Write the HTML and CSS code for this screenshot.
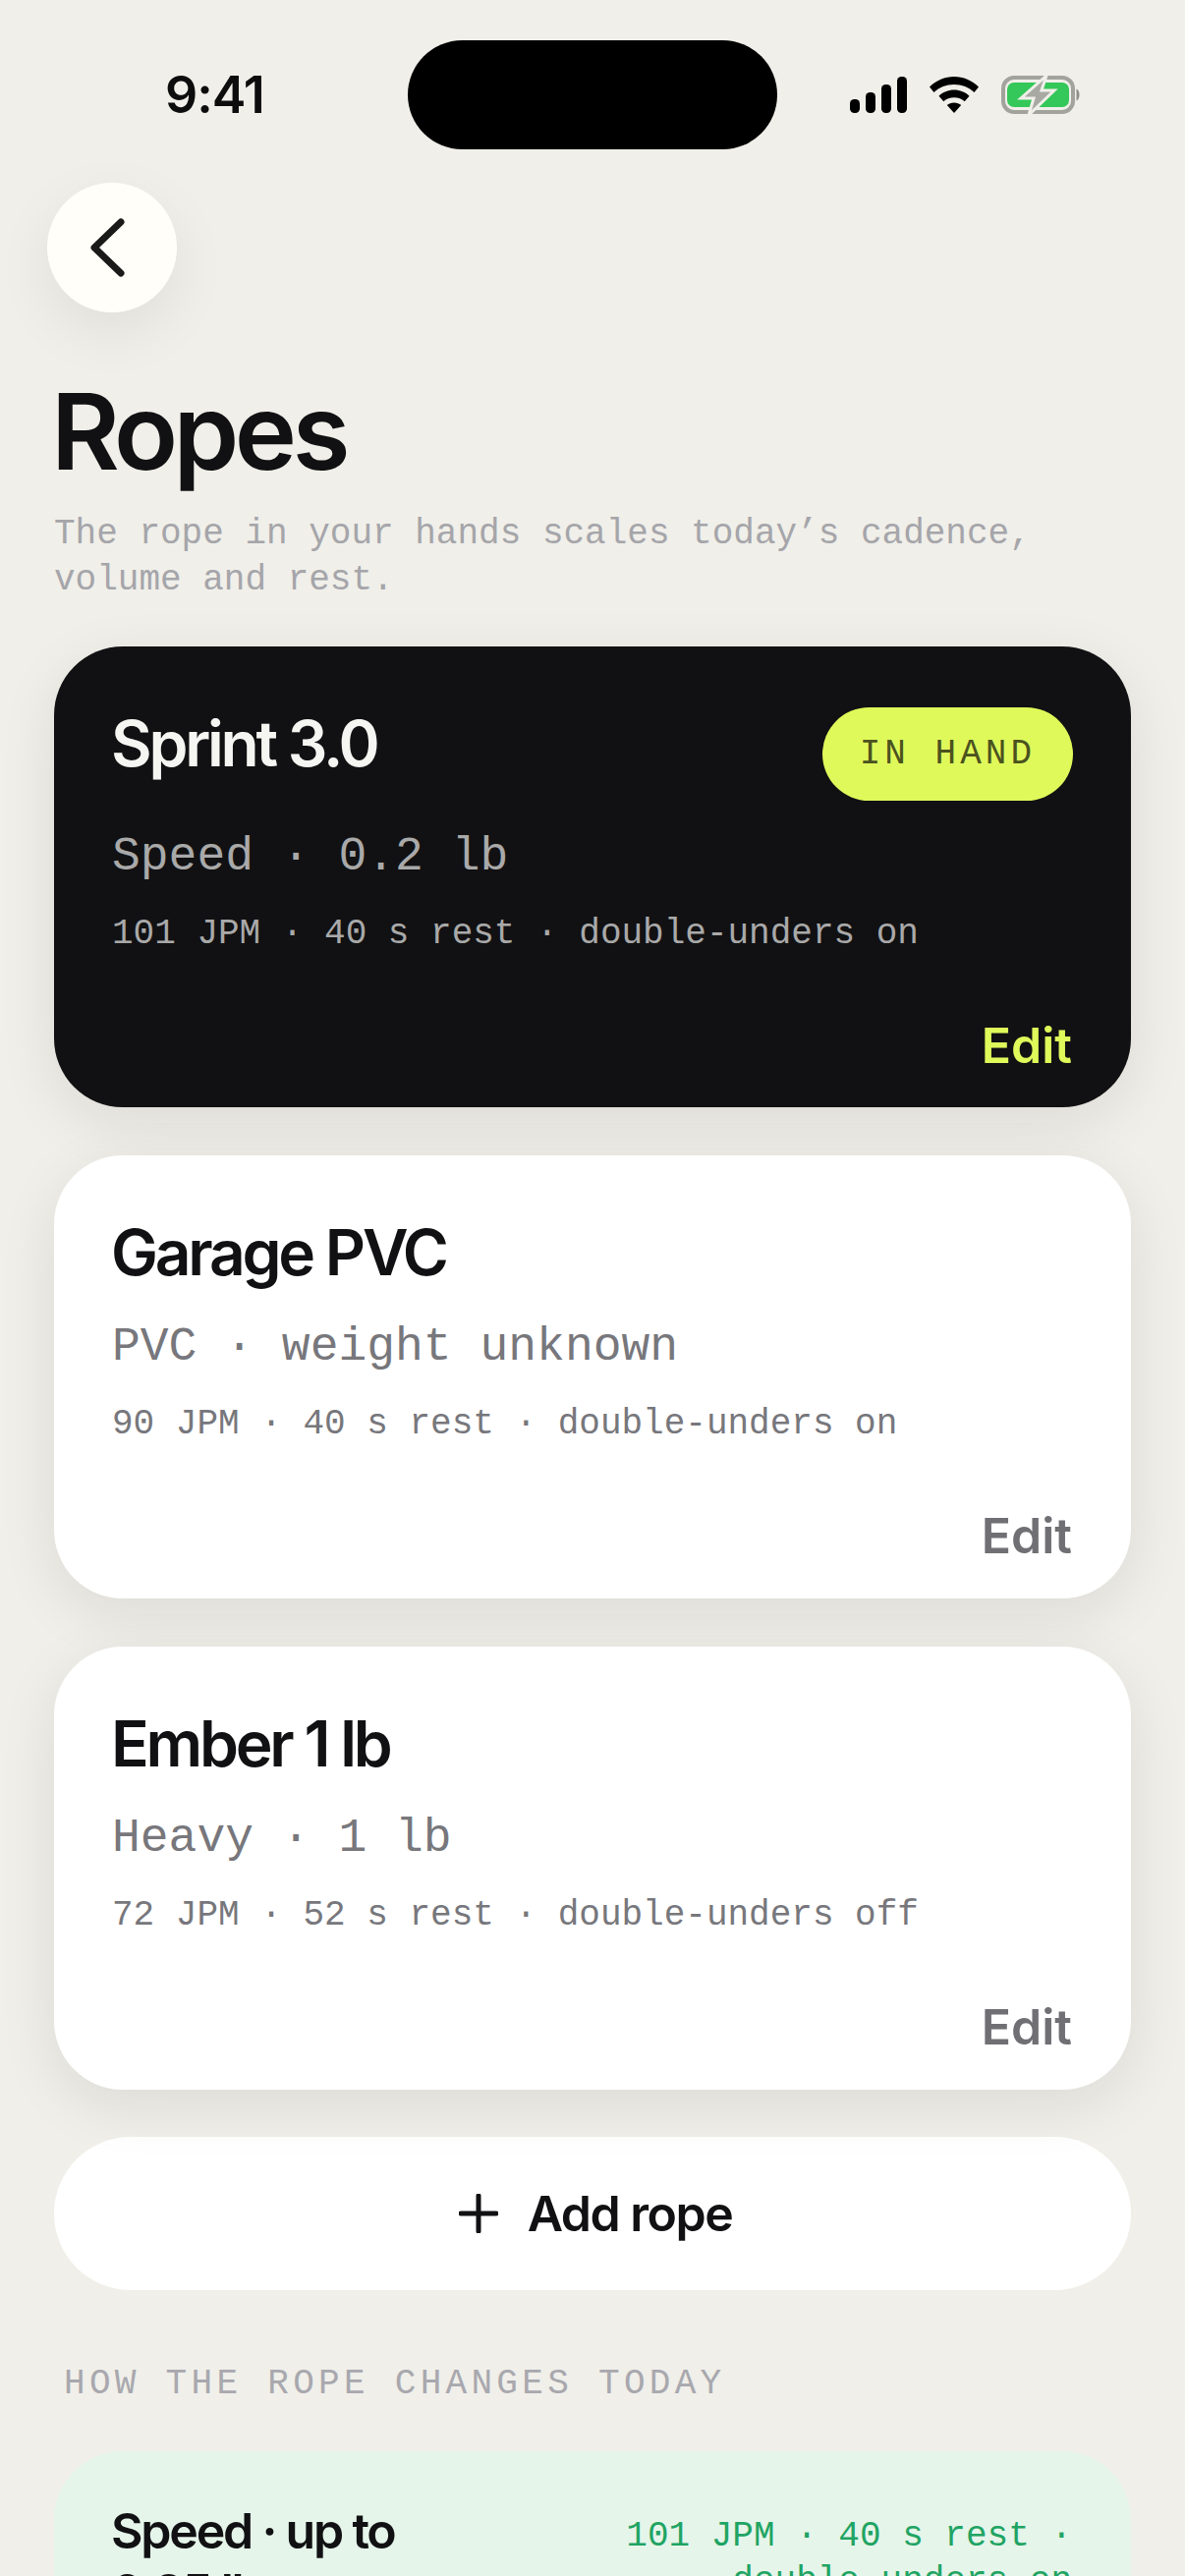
FILE: index.html
```html
<!DOCTYPE html>
<html lang="en">
<head>
<meta charset="utf-8">
<title>Ropes</title>
<link rel="stylesheet" href="styles.css">
</head>
<body>
<div class="phone">
  <header class="status">
    <span class="clock">9:41</span>
    <div class="island"></div>
    <div class="status-icons">
      <svg width="58" height="37" viewBox="0 0 58 37"><rect x="0" y="23" width="10" height="14" rx="4.500"/><rect x="16" y="16" width="10" height="21" rx="4.500"/><rect x="32" y="8" width="10" height="29" rx="4.500"/><rect x="48" y="0" width="10" height="37" rx="4.500"/></svg>
      <svg width="50" height="37" viewBox="0 0 50 37"><path d="M25 0C15.500 0 7 3.800 0 10.500l4.500 5.500C10 10.800 17 8 25 8s15 2.800 20.500 8l4.500-5.500C43 3.800 34.500 0 25 0z"/><path d="M25 13.500c-6 0-11.500 2.300-15.500 6.200l4.800 5.600c2.800-2.600 6.500-4 10.700-4s7.900 1.400 10.700 4l4.800-5.600c-4-3.900-9.500-6.200-15.500-6.200z"/><path d="M25 26.500c-2.900 0-5.300 1-7.200 2.600L25 37l7.200-7.900c-1.900-1.600-4.300-2.600-7.200-2.600z"/></svg>
      <svg width="82" height="41" viewBox="0 0 82 41"><rect x="2" y="3" width="71" height="35" rx="11" fill="none" stroke="#a3a39e" stroke-width="4"/><rect x="6" y="8" width="63" height="25" rx="7" fill="#34c759"/><path d="M76.500 14.500c4 1 4 11 0 12z" fill="#8f8f8a"/><path d="M46 1L20 24h13l-5 17 26-25H41z" fill="#a9a9a4" stroke="#f0efe9" stroke-width="3"/></svg>
    </div>
  </header>

  <button class="back" aria-label="Back">
    <svg width="44" height="60" viewBox="0 0 44 60"><path d="M36 4L9 30l27 26" fill="none" stroke="#1a1a18" stroke-width="7" stroke-linecap="round" stroke-linejoin="round"/></svg>
  </button>

  <h1 class="title">Ropes</h1>
  <p class="lede">The rope in your hands scales today’s cadence, volume and rest.</p>

  <section class="rope-list">
    <article class="rope rope-active">
      <div class="rope-head">
        <h2 class="rope-name">Sprint 3.0</h2>
        <span class="pill">IN HAND</span>
      </div>
      <p class="rope-kind">Speed · 0.2 lb</p>
      <p class="rope-stats">101 JPM · 40 s rest · double-unders on</p>
      <div class="rope-foot"><span class="edit">Edit</span></div>
    </article>
    <article class="rope">
      <div class="rope-head"><h2 class="rope-name">Garage PVC</h2></div>
      <p class="rope-kind">PVC · weight unknown</p>
      <p class="rope-stats">90 JPM · 40 s rest · double-unders on</p>
      <div class="rope-foot"><span class="edit">Edit</span></div>
    </article>
    <article class="rope">
      <div class="rope-head"><h2 class="rope-name">Ember 1 lb</h2></div>
      <p class="rope-kind">Heavy · 1 lb</p>
      <p class="rope-stats">72 JPM · 52 s rest · double-unders off</p>
      <div class="rope-foot"><span class="edit">Edit</span></div>
    </article>
  </section>

  <button class="add">
    <svg width="40" height="40" viewBox="0 0 40 40"><path d="M20 2v36M2 20h36" stroke="#111113" stroke-width="5" stroke-linecap="round"/></svg>
    <span>Add rope</span>
  </button>

  <h3 class="section-label">HOW THE ROPE CHANGES TODAY</h3>

  <article class="change">
    <h4 class="change-name">Speed · up to 0.25 lb</h4>
    <p class="change-stats">101 JPM · 40 s rest · double-unders on</p>
  </article>
</div>
</body>
</html>
```
FILE: styles.css
```css
* { box-sizing: border-box; margin: 0; padding: 0; }
html, body { height: 100%; }
body { background: #f0efe9; overflow: hidden; }

.phone {
  width: 1206px;
  height: 2622px;
  padding: 0 55px;
  overflow: hidden;
  font-family: "Inter", "Liberation Sans", sans-serif;
  color: #111113;
}

/* status bar */
.status {
  display: flex;
  align-items: center;
  height: 111px;
  margin-top: 41px;
}
.clock {
  width: 360px;
  padding-left: 113px;
  font: 600 52px "Inter", sans-serif;
  letter-spacing: -1px;
  color: #0d0d0d;
}
.island { width: 376px; height: 111px; border-radius: 56px; background: #000; }
.status-icons { display: flex; align-items: center; margin-left: 74px; gap: 23px; }
.status-icons svg { display: block; }

.back {
  display: flex;
  align-items: center;
  justify-content: center;
  width: 132px;
  height: 132px;
  margin: 34px 0 0 -7px;
  padding-right: 10px;
  border: 0;
  border-radius: 50%;
  background: #fffef8;
  box-shadow: 0 20px 60px rgba(17, 17, 19, 0.07);
}

.title {
  margin: 66px 0 0 -3px;
  font-size: 107px;
  line-height: 110px;
  font-weight: 600;
  letter-spacing: -4.500px;
  color: #111113;
}

.lede {
  margin-top: 26px;
  width: 1040px;
  font: 400 36px/47px "Liberation Mono", monospace;
  color: #a5a5aa;
}

/* rope cards */
.rope-list { display: flex; flex-direction: column; gap: 49px; margin-top: 44px; }
.rope {
  padding: 62px 60px 36px;
  height: 451px;
  border-radius: 70px;
  background: #fff;
  box-shadow: 0 16px 60px rgba(17, 17, 19, 0.09);
}
.rope-active {
  height: 469px;
  background: #111113;
}
.rope-head { display: flex; justify-content: space-between; align-items: flex-start; height: 73px; }
.rope-active .rope-head { height: 92px; }
.rope-name {
  margin: 4px 0 0 -2px;
  font-size: 64px;
  line-height: 66px;
  font-weight: 600;
  letter-spacing: -3.200px;
  color: #111113;
}
.rope-active .rope-name { color: #f5f5f2; }
.pill {
  flex: none;
  margin: 0 -1px 0 0;
  padding: 0 38px;
  height: 95px;
  border-radius: 48px;
  background: #dff95a;
  color: #4b521e;
  font: 400 36px/95px "Liberation Mono", monospace;
  letter-spacing: 4px;
}
.rope-kind {
  margin: 31px 0 0 -1px;
  font: 400 48px/58px "Liberation Mono", monospace;
  color: #77777c;
}
.rope-stats {
  margin: 27px 0 0 -1px;
  font: 400 36px/46px "Liberation Mono", monospace;
  color: #77777c;
}
.rope-active .rope-kind, .rope-active .rope-stats { color: #a9a9a9; }
.rope-foot { display: flex; justify-content: flex-end; margin-top: 60px; }
.edit { font-size: 50px; line-height: 60px; font-weight: 600; color: #6f6f74; }
.rope-active .edit { color: #dff95a; }

.add {
  display: flex;
  align-items: center;
  justify-content: center;
  gap: 30px;
  width: 100%;
  height: 156px;
  margin-top: 48px;
  padding-left: 6px;
  border: 0;
  border-radius: 78px;
  background: #fff;
  font: 600 50px "Inter", sans-serif;
  letter-spacing: -1.500px;
  color: #111113;
}

.section-label {
  margin: 73px 0 0 10px;
  font: 400 36px/46px "Liberation Mono", monospace;
  letter-spacing: 4.300px;
  color: #a8a8ae;
}

/* tinted change card at the fold */
.change {
  display: flex;
  justify-content: space-between;
  gap: 40px;
  height: 300px;
  margin-top: 45px;
  padding: 50px 60px;
  border-radius: 70px;
  background: #e5f5ea;
}
.change-name { width: 360px; margin-left: -2px; font-size: 50px; line-height: 62px; font-weight: 600; letter-spacing: -2.200px; }
.change-stats {
  width: 500px;
  padding-top: 14px;
  text-align: right;
  font: 400 36px/46px "Liberation Mono", monospace;
  color: #1fa463;
}
```
